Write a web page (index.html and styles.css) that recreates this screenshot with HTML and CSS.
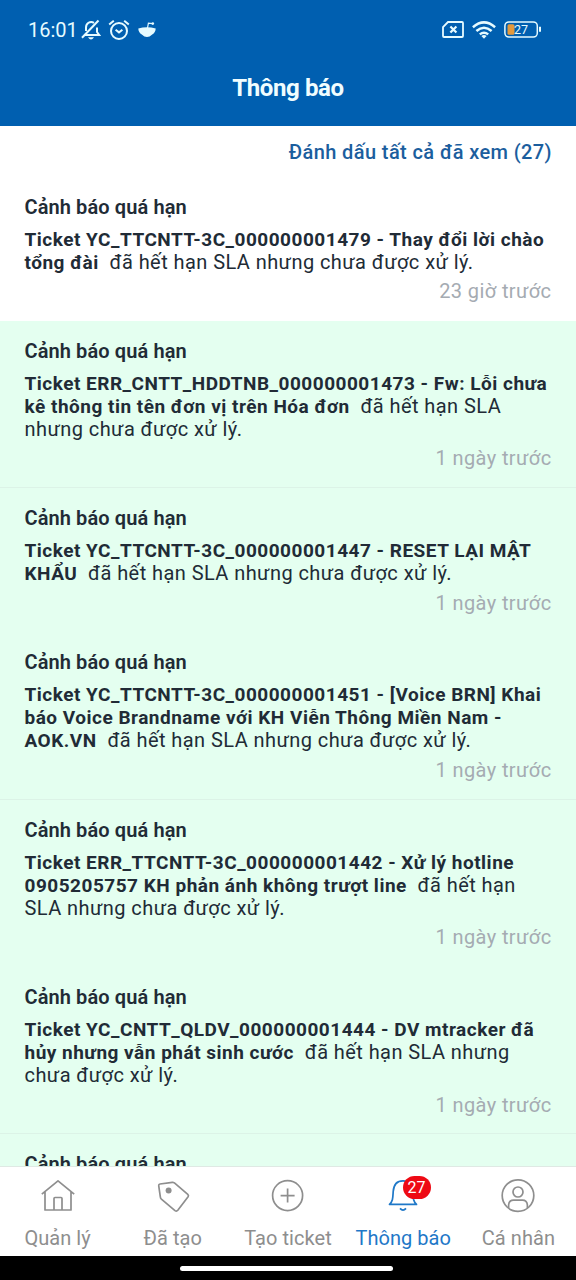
FILE: index.html
```html
<!DOCTYPE html>
<html lang="vi">
<head>
    <meta charset="UTF-8">
    <meta name="viewport" content="width=device-width, initial-scale=1">
    <title>Thông báo</title>
    <link rel="stylesheet" href="styles.css">
</head>
<body>
    <header>
        <div class="status-bar">
            <span class="clock">16:01</span>
            <svg class="ic-mute" width="20" height="22" viewBox="0 0 20 22" fill="none" stroke="currentColor" stroke-width="2">
                <path d="M4 16H18.2L16 13V8.5M13 3.8C9 1.4 5 4.5 5 8.5V12"/>
                <path d="M1 18.8L17.5 1.5"/>
                <path d="M7 18.2H13Q10 22.6 7 18.2Z" fill="currentColor" stroke="none"/>
            </svg>
            <svg class="ic-alarm" width="22" height="22" viewBox="0 0 22 22" fill="none" stroke="currentColor" stroke-width="2">
                <circle cx="11" cy="12" r="8"/>
                <path d="M1.2 5.6L5.8 1.8M20.8 5.6L16.2 1.8M7.6 10.8L11 13.4L14.4 10.8"/>
            </svg>
            <svg class="ic-app" width="18" height="18" viewBox="0 0 18 18">
                <path d="M0.3 7.4Q9 5 17.7 7.4Q17.5 11.5 14.2 13.4Q9 18.4 3.8 13.4Q0.5 11.5 0.3 7.4Z" fill="currentColor"/>
                <path d="M9.5 7L10.4 2.2L14.5 2.6" fill="none" stroke="currentColor" stroke-width="1.2"/>
                <circle cx="14.8" cy="2.6" r="1.3" fill="currentColor"/>
            </svg>
            <span class="spacer"></span>
            <svg class="ic-sim" width="22" height="17" viewBox="0 0 22 17" fill="none" stroke="currentColor" stroke-width="1.8">
                <path d="M6 1H20Q21 1 21 2V15Q21 16 20 16H2Q1 16 1 15V6Z"/>
                <path d="M8.4 5.4L14.4 11.6M14.4 5.4L8.4 11.6" stroke-width="2.2"/>
            </svg>
            <svg class="ic-wifi" width="24" height="18" viewBox="0 0 24 18" fill="none" stroke="currentColor" stroke-width="2.5">
                <path d="M0.9 6.2Q12 -3.4 23.1 6.2M4.4 10Q12 3.4 19.6 10M7.8 13.4Q12 10 16.2 13.4"/>
                <path d="M9.4 15Q12 13 14.6 15L12 17.8Z" fill="currentColor" stroke="none"/>
            </svg>
            <svg class="ic-battery" width="38" height="17" viewBox="0 0 38 17">
                <rect x="0.9" y="0.9" width="32.4" height="15.2" rx="4" fill="none" stroke="currentColor" stroke-width="1.5"/>
                <rect x="3.5" y="3.3" width="7" height="10.4" rx="1.5" fill="#e3993c"/>
                <path d="M36 5.8V10.8" stroke="currentColor" stroke-width="2"/>
                <text x="10" y="12.6" class="battery-level">27</text>
            </svg>
        </div>
        <h1>Thông báo</h1>
    </header>

    <main>
        <div class="mark-all"><a>Đánh dấu tất cả đã xem (27)</a></div>

        <article class="item read">
            <h2>Cảnh báo quá hạn</h2>
            <p><b>Ticket YC_TTCNTT-3C_000000001479 - Thay đổi lời chào tổng đài</b>&nbsp; đã hết hạn SLA nhưng chưa được xử lý.</p>
            <time>23 giờ trước</time>
        </article>
        <article class="item line">
            <h2>Cảnh báo quá hạn</h2>
            <p><b>Ticket ERR_CNTT_HDDTNB_000000001473 - Fw: Lỗi chưa kê thông tin tên đơn vị trên Hóa đơn</b>&nbsp; đã hết hạn SLA nhưng chưa được xử lý.</p>
            <time>1 ngày trước</time>
        </article>
        <article class="item">
            <h2>Cảnh báo quá hạn</h2>
            <p><b>Ticket YC_TTCNTT-3C_000000001447 - RESET LẠI MẬT KHẨU</b>&nbsp; đã hết hạn SLA nhưng chưa được xử lý.</p>
            <time>1 ngày trước</time>
        </article>
        <article class="item line">
            <h2>Cảnh báo quá hạn</h2>
            <p><b>Ticket YC_TTCNTT-3C_000000001451 - [Voice BRN] Khai báo Voice Brandname với KH Viễn Thông Miền Nam - AOK.VN</b>&nbsp; đã hết hạn SLA nhưng chưa được xử lý.</p>
            <time>1 ngày trước</time>
        </article>
        <article class="item">
            <h2>Cảnh báo quá hạn</h2>
            <p><b>Ticket ERR_TTCNTT-3C_000000001442 - Xử lý hotline 0905205757 KH phản ánh không trượt line</b>&nbsp; đã hết hạn SLA nhưng chưa được xử lý.</p>
            <time>1 ngày trước</time>
        </article>
        <article class="item line">
            <h2>Cảnh báo quá hạn</h2>
            <p><b>Ticket YC_CNTT_QLDV_000000001444 - DV mtracker đã hủy nhưng vẫn phát sinh cước</b>&nbsp; đã hết hạn SLA nhưng chưa được xử lý.</p>
            <time>1 ngày trước</time>
        </article>
        <article class="item">
            <h2>Cảnh báo quá hạn</h2>
        </article>
    </main>

    <nav>
        <a class="tab">
            <svg width="36" height="36" viewBox="0 0 36 36">
                <path d="M1.8 16.2L18 2.8L34.2 16.2M5 14V32H31V14M14 32V20.5Q14 19.5 15 19.5H21Q22 19.5 22 20.5V32"/>
            </svg>
            <span>Quản lý</span>
        </a>
        <a class="tab">
            <svg width="36" height="36" viewBox="0 0 36 36">
                <path d="M5 6L17.3 4.3Q18.4 4.2 19.4 4.9L32.8 16.3Q34 17.5 33.1 18.8L22.8 32.3Q21.6 33.7 20 32.6L6.4 21.1Q5.4 20.2 5.3 18.7L3.7 7.7Q3.6 6.2 5 6Z"/>
                <circle class="dot" cx="13.6" cy="12.4" r="3"/>
            </svg>
            <span>Đã tạo</span>
        </a>
        <a class="tab">
            <svg width="36" height="36" viewBox="0 0 36 36">
                <circle cx="17.6" cy="17.6" r="15"/>
                <path d="M17.6 10.6V24.6M10.6 17.6H24.6"/>
            </svg>
            <span>Tạo ticket</span>
        </a>
        <a class="tab active">
            <svg width="36" height="36" viewBox="0 0 36 36">
                <path d="M4.5 26.4H31.5C28 23 28.2 20 27.8 13.5C27.3 6.4 23.5 2.8 18 2.8C12.5 2.8 8.7 6.4 8.2 13.5C7.8 20 8 23 4.5 26.4Z"/>
                <path d="M15 30.4Q18 33.8 21 30.4"/>
            </svg>
            <em class="badge">27</em>
            <span>Thông báo</span>
        </a>
        <a class="tab">
            <svg width="36" height="36" viewBox="0 0 36 36">
                <circle cx="18" cy="17.6" r="15.8"/>
                <circle cx="18" cy="14" r="5"/>
                <path d="M8.6 30.1V27Q9 22.2 13.6 22.2H22.4Q27 22.2 27.4 27V30.1"/>
            </svg>
            <span>Cá nhân</span>
        </a>
    </nav>
    <footer><i></i></footer>
</body>
</html>
```
FILE: styles.css
```css
:root {
    --primary: #005fb0;
    --link: #1b5e9e;
    --active: #1f78c8;
    --text: #212b36;
    --muted: #a5abb2;
    --tab: #8e8e8e;
    --unread: #e4fff0;
}
* { box-sizing: border-box; }
body {
    margin: 0;
    height: 1280px;
    display: flex;
    flex-direction: column;
    overflow: hidden;
    font-family: Roboto, "Noto Sans", sans-serif;
    background: #fff;
    color: var(--text);
}
header {
    flex: none;
    height: 126px;
    background: var(--primary);
    color: #e6fbff;
}
.status-bar {
    display: flex;
    align-items: center;
    height: 59px;
    padding: 0 34px 0 28px;
}
.clock { font-size: 20px; width: 53px; padding-top: 1px; }
.ic-alarm { margin-left: 7px; }
.ic-app { margin-left: 8px; }
.spacer { flex: 1; }
.ic-wifi { margin-left: 8px; }
.ic-battery { margin-left: 8px; }
.battery-level { font-size: 12.5px; fill: currentColor; }
h1 {
    margin: 13px 0 0;
    font-size: 24px;
    line-height: 32px;
    font-weight: 700;
    letter-spacing: -0.4px;
    text-align: center;
    color: #f0fdff;
}

main { flex: 1; min-height: 0; overflow: hidden; }
.mark-all {
    height: 50.5px;
    padding: 14px 24px 0;
    font-size: 20px;
    line-height: 24px;
    font-weight: 500;
    letter-spacing: 0.4px;
    text-align: right;
    color: var(--link);
}
.item {
    padding: 19.1px 24.5px 17.2px;
    background: var(--unread);
}
.item.read { background: #fff; }
.item.line { box-shadow: inset 0 -1px #dcf3e7; }
.item h2 {
    margin: 0 0 9px;
    font-size: 20px;
    line-height: 23px;
    font-weight: 600;
    letter-spacing: 0.1px;
}
.item p {
    margin: 0;
    font-size: 20px;
    line-height: 23px;
    letter-spacing: 0.43px;
}
.item b {
    font-size: 19px;
    line-height: 1;
    letter-spacing: 0.5px;
}
.item time {
    display: block;
    margin-top: 6.5px;
    margin-bottom: 0.5px;
    font-size: 20px;
    line-height: 23px;
    letter-spacing: 0.4px;
    text-align: right;
    color: var(--muted);
}

nav {
    flex: none;
    display: grid;
    grid-template-columns: repeat(5, 1fr);
    height: 90px;
    border-top: 1px solid #dfe9e4;
    background: #fff;
}
.tab {
    position: relative;
    display: flex;
    flex-direction: column;
    align-items: center;
    padding-top: 11px;
    font-size: 20px;
    line-height: 26px;
    color: var(--tab);
}
.tab span { margin-top: 11px; white-space: nowrap; letter-spacing: 0.05px; }
.tab svg {
    fill: none;
    stroke: currentColor;
    stroke-width: 1.7;
    stroke-linejoin: round;
}
.tab .dot { fill: currentColor; stroke: none; }
.tab.active { color: var(--active); }
.badge {
    position: absolute;
    top: 9px;
    left: 57px;
    width: 28px;
    height: 23px;
    border-radius: 12px;
    background: #ee0a14;
    color: #fff;
    font-size: 16px;
    font-style: normal;
    line-height: 23px;
    text-align: center;
}
footer {
    flex: none;
    display: flex;
    justify-content: center;
    height: 24px;
    padding: 10px 3px 0 0;
    background: #000;
}
footer i {
    width: 213px;
    height: 5px;
    border-radius: 3px;
    background: #fff;
}
```
